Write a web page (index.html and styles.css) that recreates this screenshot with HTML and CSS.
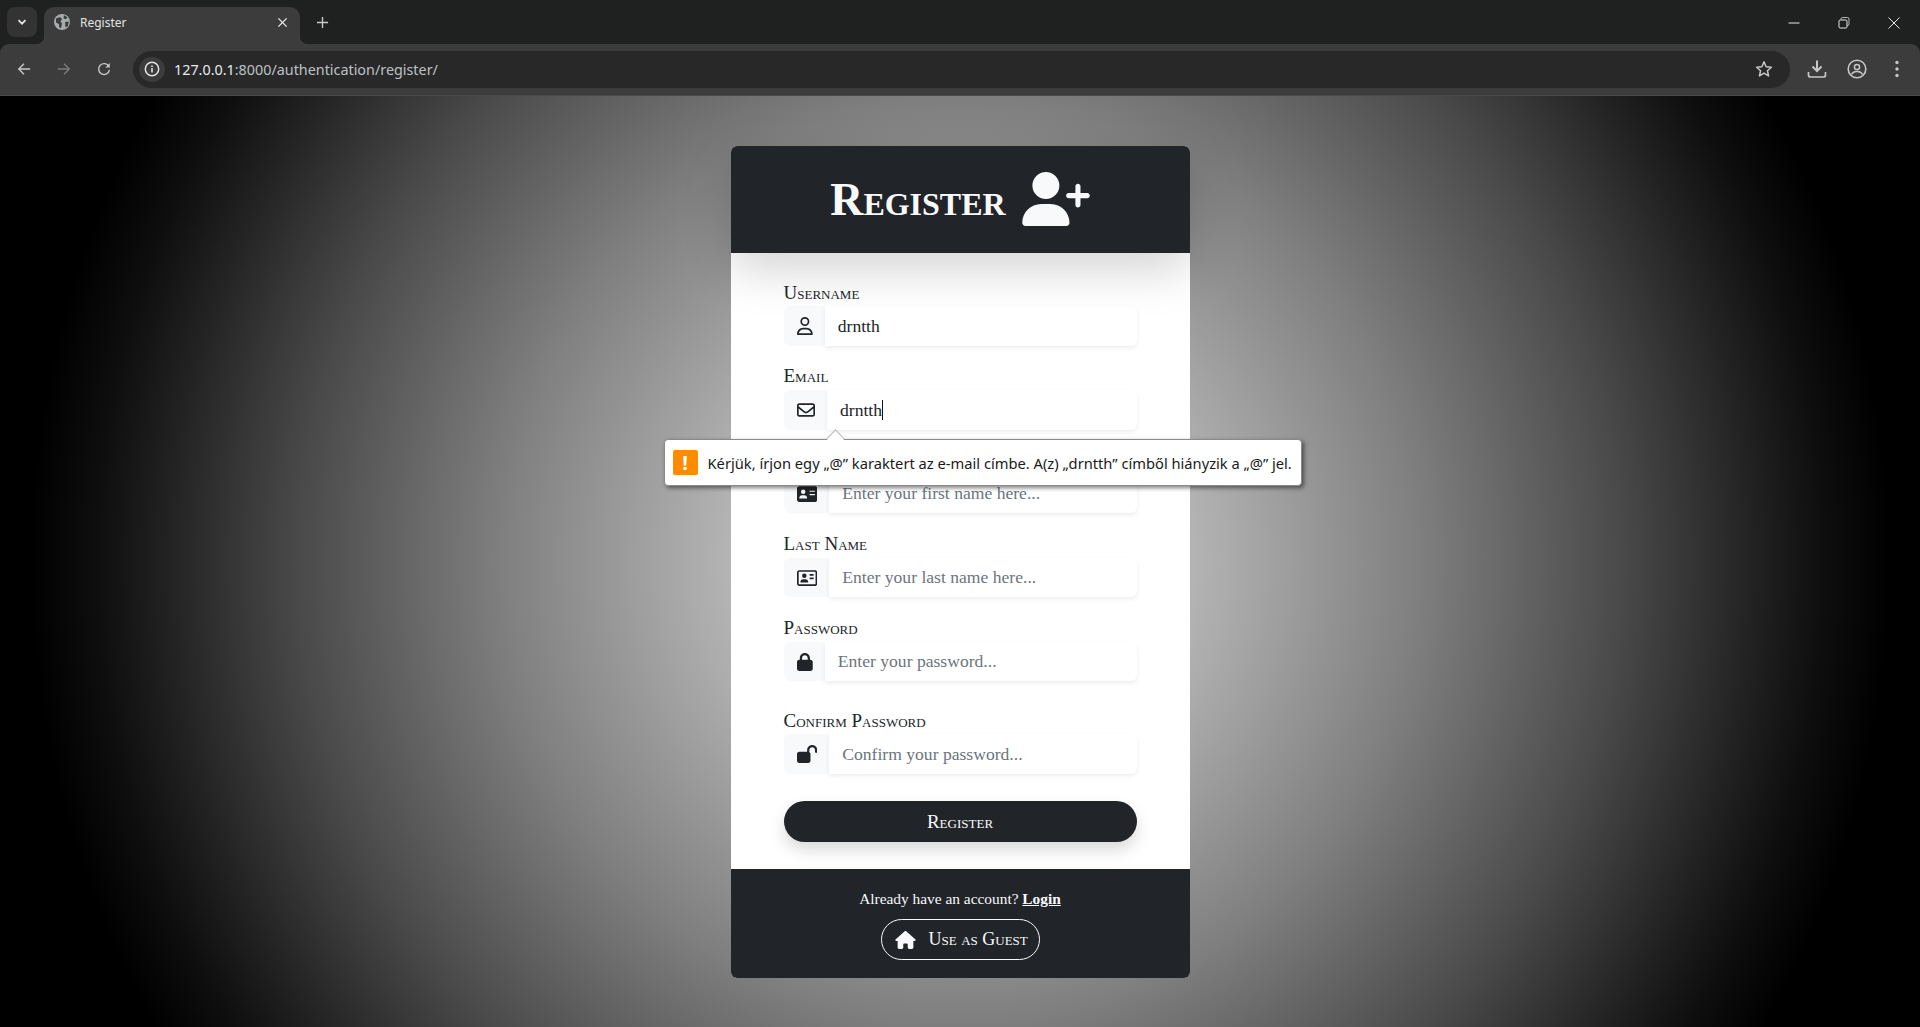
FILE: index.html
```html
<!DOCTYPE html>
<html lang="hu">
<head>
<meta charset="utf-8">
<title>Register</title>
<link rel="stylesheet" href="styles.css">
</head>
<body>
<div class="browser">
  <div class="tabstrip">
    <button class="tab-menu" aria-label="Tabs">
      <svg class="ic12" viewBox="0 0 12 12"><path d="M2.5 4.2 6 7.7l3.5-3.5" fill="none" stroke="#e3e3e3" stroke-width="1.8"/></svg>
    </button>
    <div class="tab">
      <svg class="ic16" viewBox="0 0 16 16"><circle cx="8" cy="8" r="8" fill="#a8abae"/><path d="M2 4.500 6 3l2 2-1.500 2.500L8 9.500l-1 4.800-2-1.300V10L2 8.500ZM10 1.200l3.500 2-1.500 2-2.500-.8ZM11 8l3.800-.5-.8 4.500-2.500 1.500Z" fill="#3c3c3c"/></svg>
      <span class="tab-title">Register</span>
      <svg class="tab-close" viewBox="0 0 12 12"><path d="M1.500 1.500l9 9m0-9-9 9" stroke="#e8e8e8" stroke-width="1.500" fill="none"/></svg>
    </div>
    <svg class="tab-new" viewBox="0 0 14 14"><path d="M7 1v12M1 7h12" stroke="#c9c9c9" stroke-width="1.500" fill="none"/></svg>
    <div class="win-controls">
      <svg class="win-ic" viewBox="0 0 12 12"><path d="M.5 6h11" stroke="#e8e8e8" stroke-width="1"/></svg>
      <svg class="win-ic" viewBox="0 0 12 12"><path d="M3 2.500V2a1.500 1.500 0 0 1 1.500-1.500h5A1.500 1.500 0 0 1 11 2v5a1.500 1.500 0 0 1-1.500 1.500H9" stroke="#b8b8b8" fill="none"/><rect x="1" y="3" width="8" height="8" rx="1.200" stroke="#e8e8e8" fill="none"/></svg>
      <svg class="win-ic" viewBox="0 0 12 12"><path d="M.5.5l11 11m0-11-11 11" stroke="#e8e8e8" stroke-width="1" fill="none"/></svg>
    </div>
  </div>
  <div class="toolbar">
    <svg class="nav-ic" viewBox="0 0 16 16"><path d="M15 8H2M8 2 2 8l6 6" fill="none" stroke="#c7c7c7" stroke-width="1.600"/></svg>
    <svg class="nav-ic" viewBox="0 0 16 16"><path d="M1 8h13M8 2l6 6-6 6" fill="none" stroke="#7b7b7b" stroke-width="1.600"/></svg>
    <svg class="nav-ic" viewBox="0 0 16 16"><path d="M13.600 5.200A6.200 6.200 0 1 0 14.200 9" fill="none" stroke="#c7c7c7" stroke-width="1.600"/><path d="M14.600 1.200v5h-5Z" fill="#c7c7c7"/></svg>
    <div class="omnibox">
      <span class="site-chip">
        <svg class="ic16" viewBox="0 0 16 16"><circle cx="8" cy="8" r="6.700" fill="none" stroke="#e3e3e3" stroke-width="1.500"/><path d="M8 7v4.400M8 4.400v1.500" stroke="#e3e3e3" stroke-width="1.600"/></svg>
      </span>
      <span class="url"><span class="url-host">127.0.0.1</span>:8000/authentication/register/</span>
      <svg class="star" viewBox="0 0 18 18"><path d="M9 1.800l2.100 4.900 5.300.5-4 3.500 1.200 5.200L9 13.100l-4.600 2.800 1.200-5.200-4-3.500 5.300-.5Z" fill="none" stroke="#c7c7c7" stroke-width="1.500" stroke-linejoin="round"/></svg>
    </div>
    <div class="tool-icons">
      <svg class="tool-ic" viewBox="0 0 20 20"><path d="M10 1.500v10M5.500 7.500l4.500 4.500 4.500-4.500" fill="none" stroke="#c7c7c7" stroke-width="2"/><path d="M1.500 13v3a2 2 0 0 0 2 2h13a2 2 0 0 0 2-2v-3" fill="none" stroke="#c7c7c7" stroke-width="1.700"/></svg>
      <svg class="tool-ic" viewBox="0 0 20 20"><circle cx="10" cy="10" r="8.800" fill="none" stroke="#c7c7c7" stroke-width="1.600"/><circle cx="10" cy="8" r="2.600" fill="none" stroke="#c7c7c7" stroke-width="1.500"/><path d="M4.500 15.500c1-2.200 3-3 5.500-3s4.500.8 5.500 3" fill="none" stroke="#c7c7c7" stroke-width="1.500"/></svg>
      <svg class="tool-ic" viewBox="0 0 20 20"><circle cx="10" cy="3.500" r="1.700" fill="#c7c7c7"/><circle cx="10" cy="10" r="1.700" fill="#c7c7c7"/><circle cx="10" cy="16.500" r="1.700" fill="#c7c7c7"/></svg>
    </div>
  </div>

  <main class="page">
    <section class="card">
      <header class="card-head">
        <h1 class="card-title">Register</h1>
        <svg class="head-icon" viewBox="0 0 640 512"><path d="M96 128a128 128 0 1 1 256 0A128 128 0 1 1 96 128zM0 482.300C0 383.800 79.800 304 178.300 304h91.400C368.200 304 448 383.800 448 482.300c0 16.400-13.300 29.700-29.700 29.700H29.700C13.300 512 0 498.700 0 482.300zM504 312V248H440c-13.300 0-24-10.700-24-24s10.700-24 24-24h64V136c0-13.300 10.700-24 24-24s24 10.700 24 24v64h64c13.300 0 24 10.700 24 24s-10.700 24-24 24H552v64c0 13.300-10.700 24-24 24s-24-10.700-24-24z"/></svg>
      </header>
      <form class="card-body">
        <div class="field">
          <label class="field-label">Username</label>
          <div class="input-group">
            <span class="addon"><svg class="fa w448" viewBox="0 0 448 512"><path d="M304 128a80 80 0 1 0-160 0 80 80 0 1 0 160 0zM96 128a128 128 0 1 1 256 0A128 128 0 1 1 96 128zM49.300 464H398.700c-8.900-63.300-63.300-112-129-112H178.300c-65.700 0-120.100 48.700-129 112zM0 482.300C0 383.800 79.800 304 178.300 304h91.400C368.200 304 448 383.800 448 482.300c0 16.400-13.300 29.700-29.700 29.700H29.700C13.300 512 0 498.700 0 482.300z"/></svg></span>
            <input class="control" type="text" value="drntth">
          </div>
        </div>
        <div class="field field-up">
          <label class="field-label">Email</label>
          <div class="input-group email-group">
            <span class="addon"><svg class="fa w512" viewBox="0 0 512 512"><path d="M64 112c-8.800 0-16 7.200-16 16v22.100L220.500 291.700c20.700 17 50.400 17 71.100 0L464 150.100V128c0-8.800-7.200-16-16-16H64zM48 212.200V384c0 8.800 7.200 16 16 16H448c8.800 0 16-7.200 16-16V212.200L322 328.800c-38.400 31.500-93.700 31.500-132 0L48 212.200zM0 128C0 92.700 28.700 64 64 64H448c35.300 0 64 28.700 64 64V384c0 35.300-28.700 64-64 64H64c-35.300 0-64-28.700-64-64V128z"/></svg></span>
            <input class="control" type="text" value="drntth">
            <span class="caret"></span>
            <div class="bubble">
              <span class="bubble-arrow"></span>
              <span class="bubble-icon">!</span>
              <span class="bubble-text">Kérjük, írjon egy „@” karaktert az e-mail címbe. A(z) „drntth” címből hiányzik a „@” jel.</span>
            </div>
          </div>
        </div>
        <div class="field field-short">
          <label class="field-label">First Name</label>
          <div class="input-group">
            <span class="addon"><svg class="fa w576" viewBox="0 0 576 512"><path d="M64 32C28.700 32 0 60.700 0 96V416c0 35.300 28.700 64 64 64H512c35.300 0 64-28.700 64-64V96c0-35.300-28.700-64-64-64H64zm80 256h64c44.200 0 80 35.800 80 80c0 8.800-7.200 16-16 16H80c-8.800 0-16-7.200-16-16c0-44.200 35.800-80 80-80zm-32-96a64 64 0 1 1 128 0 64 64 0 1 1-128 0zm256-32H496c8.800 0 16 7.200 16 16s-7.200 16-16 16H368c-8.800 0-16-7.200-16-16s7.200-16 16-16zm0 96H496c8.800 0 16 7.200 16 16s-7.200 16-16 16H368c-8.800 0-16-7.200-16-16s7.200-16 16-16z"/></svg></span>
            <input class="control" type="text" placeholder="Enter your first name here...">
          </div>
        </div>
        <div class="field field-short">
          <label class="field-label">Last Name</label>
          <div class="input-group">
            <span class="addon"><svg class="fa w576" viewBox="0 0 576 512"><path d="M512 80c8.800 0 16 7.200 16 16V416c0 8.800-7.200 16-16 16H64c-8.800 0-16-7.200-16-16V96c0-8.800 7.200-16 16-16H512zM64 32C28.700 32 0 60.700 0 96V416c0 35.300 28.700 64 64 64H512c35.300 0 64-28.700 64-64V96c0-35.300-28.700-64-64-64H64zM208 256a64 64 0 1 0 0-128 64 64 0 1 0 0 128zm-32 32c-44.200 0-80 35.800-80 80c0 8.800 7.200 16 16 16H304c8.800 0 16-7.200 16-16c0-44.200-35.800-80-80-80H176zM376 144c-13.300 0-24 10.700-24 24s10.700 24 24 24h80c13.300 0 24-10.700 24-24s-10.700-24-24-24H376zm0 96c-13.300 0-24 10.700-24 24s10.700 24 24 24h80c13.300 0 24-10.700 24-24s-10.700-24-24-24H376z"/></svg></span>
            <input class="control" type="text" placeholder="Enter your last name here...">
          </div>
        </div>
        <div class="field field-short field-wide">
          <label class="field-label">Password</label>
          <div class="input-group">
            <span class="addon"><svg class="fa w448" viewBox="0 0 448 512"><path d="M144 144v48H304V144c0-44.200-35.800-80-80-80s-80 35.800-80 80zM80 192V144C80 64.500 144.500 0 224 0s144 64.500 144 144v48h16c35.300 0 64 28.700 64 64V448c0 35.300-28.700 64-64 64H64c-35.300 0-64-28.700-64-64V256c0-35.300 28.700-64 64-64H80z"/></svg></span>
            <input class="control" type="password" placeholder="Enter your password...">
          </div>
        </div>
        <div class="field field-last">
          <label class="field-label">Confirm Password</label>
          <div class="input-group">
            <span class="addon"><svg class="fa w576" viewBox="0 0 576 512"><path d="M352 144c0-44.200 35.800-80 80-80s80 35.800 80 80v48c0 17.700 14.300 32 32 32s32-14.300 32-32V144C576 64.500 511.500 0 432 0S288 64.500 288 144v48H64c-35.300 0-64 28.700-64 64V448c0 35.300 28.700 64 64 64H320c35.300 0 64-28.700 64-64V256c0-35.300-28.700-64-64-64H352V144z"/></svg></span>
            <input class="control" type="password" placeholder="Confirm your password...">
          </div>
        </div>
        <button class="submit" type="button">Register</button>
      </form>
      <footer class="card-foot">
        <p class="foot-text">Already have an account? <a class="foot-link" href="#">Login</a></p>
        <a class="guest" href="#">
          <svg class="guest-icon" viewBox="0 0 576 512"><path d="M575.800 255.500c0 18-15 32.100-32 32.100h-32l.7 160.200c0 2.700-.2 5.400-.5 8.100V472c0 22.100-17.900 40-40 40H456c-1.100 0-2.200 0-3.300-.1c-1.400 .1-2.800 .1-4.200 .1H416 392c-22.100 0-40-17.900-40-40V448 384c0-17.700-14.300-32-32-32H256c-17.700 0-32 14.300-32 32v64 24c0 22.100-17.900 40-40 40H160 128.100c-1.500 0-3-.1-4.500-.2c-1.200 .1-2.400 .2-3.600 .2H104c-22.100 0-40-17.900-40-40V360c0-.9 0-1.900 .1-2.800V287.600H32c-18 0-32-14-32-32.100c0-9 3-17 10-24L266.400 8c7-7 15-8 22-8s15 2 21 7L564.800 231.500c8 7 12 15 11 24z"/></svg>
          <span>Use as Guest</span>
        </a>
      </footer>
    </section>
  </main>
</div>
</body>
</html>
```
FILE: styles.css
```css
* { box-sizing: border-box; }
html, body { margin: 0; height: 100%; overflow: hidden; }
body { font-family: "Liberation Serif", "Times New Roman", serif; background: #1f2120; }

.browser { display: flex; flex-direction: column; height: 1027px; }

/* browser chrome */
.tabstrip { display: flex; align-items: flex-start; height: 44px; padding: 7px 0 0 7px; background: #1f2120; flex: none; }
.tab-menu { width: 30px; height: 30px; margin-right: 7px; padding: 0; border: 0; border-radius: 8px; background: #333; display: flex; align-items: center; justify-content: center; }
.ic12 { width: 12px; height: 12px; }
.ic16 { width: 16px; height: 16px; flex: none; }
.tab { position: relative; width: 256px; height: 37px; padding: 0 12px 7px 10px; display: flex; align-items: center; background: #3c3c3c; border-radius: 10px 10px 0 0; }
.tab::before, .tab::after { content: ""; position: absolute; bottom: 0; width: 8px; height: 8px; }
.tab::before { left: -8px; background: radial-gradient(circle at 0 0, transparent 8px, #3c3c3c 8.5px); }
.tab::after { right: -8px; background: radial-gradient(circle at 100% 0, transparent 8px, #3c3c3c 8.5px); }
.tab-title { margin-left: 10px; flex: 1; font: 12px "Noto Sans", sans-serif; color: #e3e3e3; }
.tab-close { width: 11px; height: 11px; }
.tab-new { width: 13px; height: 13px; margin: 9px 0 0 16px; }
.win-controls { margin-left: auto; display: flex; gap: 38px; padding: 10px 20px 0 0; }
.win-ic { width: 12px; height: 12px; }

.toolbar { position: relative; flex: none; height: 52px; padding: 0 0 1px 17px; display: flex; align-items: center; background: #3c3c3c; border-radius: 9px 9px 0 0; border-bottom: 1px solid #4a4a4a; }
.nav-ic { width: 14px; height: 14px; margin-right: 26px; flex: none; }
.nav-ic:nth-child(3) { margin-right: 22px; }
.omnibox { width: 1657px; height: 37px; padding: 0 11px 0 6px; display: flex; align-items: center; background: #282828; border-radius: 19px; flex: none; }
.site-chip { width: 26px; height: 25px; border-radius: 13px; background: #3c3c3c; display: flex; align-items: center; justify-content: center; }
.url { margin-left: 9px; flex: 1; font: 14.350px "Noto Sans", sans-serif; color: #bdc1c6; }
.url-host { color: #e8eaed; }
.star { width: 18px; height: 18px; margin-right: 6px; }
.tool-icons { display: flex; align-items: center; gap: 20px; margin-left: 17px; }
.tool-ic { width: 20px; height: 20px; }

/* page */
.page { flex: 1; min-height: 0; display: flex; justify-content: center; align-items: flex-start; padding-top: 50px;
  background: radial-gradient(circle 930px at 960px 465px, #ececec 0, #b4b4b4 230px, #7f7f7f 460px, #4a4a4a 660px, #202020 800px, #0f0f0f 860px, #000 930px); }
.card { width: 459px; background: #fff; border-radius: 6px; }
.card-head { position: relative; z-index: 1; height: 107px; display: flex; align-items: center; justify-content: center; gap: 16px; background: #212529; color: #f8f9fa; border-radius: 6px 6px 0 0; box-shadow: 0 16px 48px rgba(0, 0, 0, .175); }
.card-title { margin: 0; font-size: 45.800px; line-height: 54px; font-weight: 700; font-variant: small-caps; }
.head-icon { width: 68px; height: 54px; fill: #f8f9fa; margin-top: -2px; }

.card-body { padding: 27px 53px; background: #fff; }
.field { margin-bottom: 18px; }
.field-up .field-label { position: relative; top: -1px; }
.field-short { margin-bottom: 19px; }
.field-short .field-label { position: relative; top: -1px; }
.field-short .input-group, .field-short .control { height: 39px; }
.field-wide { margin-bottom: 27px; }
.field-last { margin-bottom: 27px; }
.field-label { display: block; height: 26px; font-size: 19px; line-height: 26px; font-variant: small-caps; color: #212529; }
.input-group { position: relative; z-index: 2; display: flex; height: 40px; }
.addon { flex: none; display: flex; align-items: center; padding: 0 12px 0 13.500px; background: #f8f9fa; border-radius: 6px 0 0 6px; }
.fa { height: 18px; fill: #212529; display: block; }
.w448 { width: 15.750px; }
.w512 { width: 18px; }
.w576 { width: 20.250px; }
.control { flex: 1; min-width: 0; height: 40px; padding: 0 13px; border: 0; outline: 0; background: #fff; border-radius: 0 6px 6px 0; font-family: "Liberation Serif", serif; font-size: 17.600px; color: #212529; box-shadow: 0 2px 4px rgba(0, 0, 0, .075); }
.control::placeholder { color: #6c757d; opacity: 1; }
.caret { position: absolute; left: 98px; top: 10px; width: 1px; height: 20px; background: #111; }

/* validation bubble */
.email-group { z-index: 5; }
.bubble { position: absolute; left: -120px; top: 49px; width: 638px; height: 47px; padding: 0 8px; display: flex; align-items: center; gap: 10px; background: #fff; border: 1px solid #8a8a8a; border-radius: 4px; box-shadow: 2px 2px 4px rgba(0, 0, 0, .5); }
.bubble-arrow { position: absolute; left: 164px; top: -8px; width: 13px; height: 13px; background: #fff; border-left: 1px solid #b9b9b9; border-top: 1px solid #b9b9b9; transform: rotate(45deg) ; }
.bubble-icon { flex: none; width: 25px; height: 25px; background: #ff8c00; color: #fff; border-radius: 2px; font: 700 20px/25px "Noto Sans", sans-serif; text-align: center; }
.bubble-text { font: 14.700px "Noto Sans", sans-serif; color: #1a1a1a; white-space: nowrap; }

.submit { display: block; width: 100%; height: 41px; padding: 0; border: 0; border-radius: 21px; background: #212529; color: #f8f9fa; font-family: "Liberation Serif", serif; font-size: 19px; font-variant: small-caps; box-shadow: 0 8px 16px rgba(0, 0, 0, .15); }

.card-foot { height: 109px; padding-top: 18px; display: flex; flex-direction: column; align-items: center; background: #212529; color: #f8f9fa; border-radius: 0 0 6px 6px; }
.foot-text { margin: 0; height: 32px; font-size: 15.400px; line-height: 24px; }
.foot-link { color: #f8f9fa; font-weight: 700; }
.guest { width: 159px; height: 41px; display: flex; align-items: center; gap: 13px; padding-left: 13px; border: 1px solid #f8f9fa; border-radius: 21px; color: #f8f9fa; font-size: 18px; font-variant: small-caps; text-decoration: none; }
.guest-icon { width: 21px; height: 18px; fill: #f8f9fa; flex: none; }
```
